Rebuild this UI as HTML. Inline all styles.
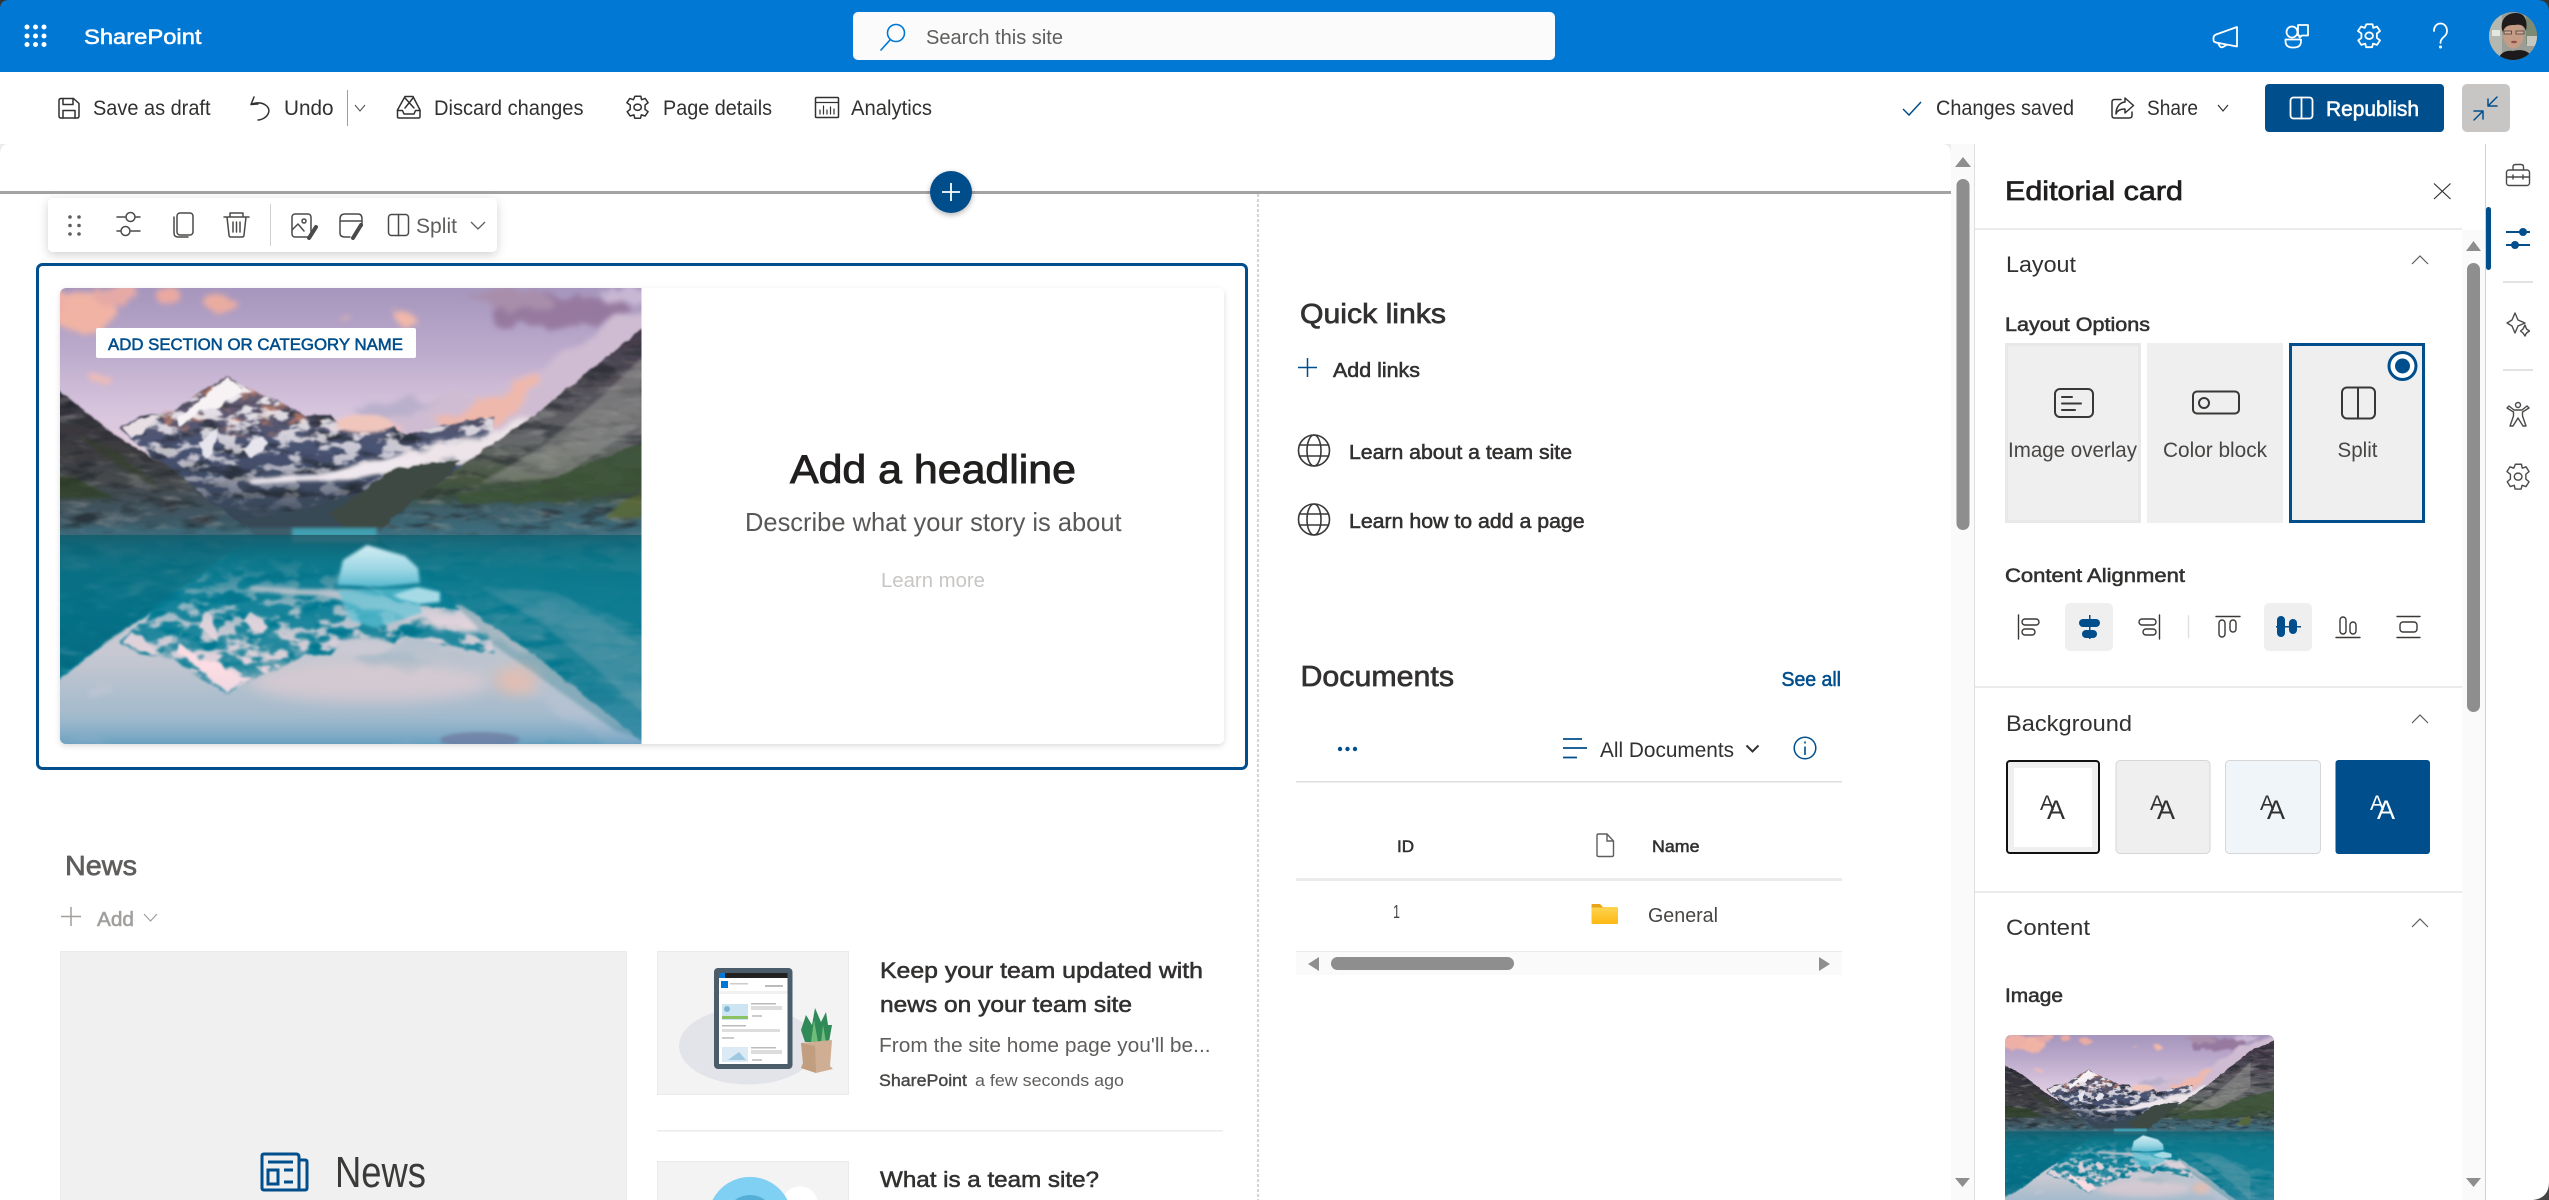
<!DOCTYPE html>
<html lang="en"><head><meta charset="utf-8"><title>SharePoint - Editorial card</title>
<style>
html,body{margin:0;padding:0;background:#fff;width:2549px;height:1200px;overflow:hidden}
svg{display:block}
#thumb{position:absolute;left:2005px;top:1035px;width:269px;height:165px;overflow:hidden;border-radius:6px 6px 0 0}
text{font-family:"Liberation Sans",sans-serif;fill:#323130;font-size:21px;white-space:pre}
.b{stroke:#323130;stroke-width:.55px}
.ic{fill:none;stroke:#323130;stroke-width:1.5;stroke-linejoin:round;stroke-linecap:round}
.w{fill:none;stroke:#fff;stroke-width:1.8;stroke-linejoin:round;stroke-linecap:round}
.bl{fill:none;stroke:#004e8c;stroke-width:1.8;stroke-linejoin:round;stroke-linecap:round}
</style></head><body>
<svg xmlns="http://www.w3.org/2000/svg" width="2549" height="1200" viewBox="0 0 2549 1200">
<defs>
<linearGradient id="sky" x1="0" y1="0" x2="0" y2="1"><stop offset="0" stop-color="#a595bc"/><stop offset=".25" stop-color="#bcaacc"/><stop offset=".5" stop-color="#d9c6de"/><stop offset=".75" stop-color="#eed5de"/><stop offset="1" stop-color="#f2d9dc"/></linearGradient>
<linearGradient id="rockG" gradientUnits="userSpaceOnUse" x1="0" y1="90" x2="0" y2="245"><stop offset="0" stop-color="#6e5f70"/><stop offset=".45" stop-color="#485272"/><stop offset="1" stop-color="#33424f"/></linearGradient>
<linearGradient id="lslope" gradientUnits="userSpaceOnUse" x1="0" y1="100" x2="0" y2="250"><stop offset="0" stop-color="#32303a"/><stop offset=".4" stop-color="#3d3c40"/><stop offset=".62" stop-color="#45494c"/><stop offset=".85" stop-color="#3f5561"/><stop offset="1" stop-color="#3a6675"/></linearGradient>
<linearGradient id="rslope" gradientUnits="userSpaceOnUse" x1="0" y1="40" x2="0" y2="250"><stop offset="0" stop-color="#43384a"/><stop offset=".3" stop-color="#55525a"/><stop offset=".55" stop-color="#66686a"/><stop offset=".72" stop-color="#46563f"/><stop offset=".8" stop-color="#3a4d40"/><stop offset=".86" stop-color="#3f5f6a"/><stop offset="1" stop-color="#3c6f80"/></linearGradient>
<linearGradient id="snA" gradientUnits="userSpaceOnUse" x1="0" y1="95" x2="0" y2="225"><stop offset="0" stop-color="#fff"/><stop offset=".6" stop-color="#fff" stop-opacity=".7"/><stop offset="1" stop-color="#fff" stop-opacity=".05"/></linearGradient>
<linearGradient id="ice" x1="0" y1="0" x2="0" y2="1"><stop offset="0" stop-color="#d3edf3"/><stop offset=".6" stop-color="#9ad6e3"/><stop offset="1" stop-color="#58b9d0"/></linearGradient>
<linearGradient id="wtop" x1="0" y1="0" x2="0" y2="1"><stop offset="0" stop-color="#14505e" stop-opacity=".75"/><stop offset=".12" stop-color="#12707f" stop-opacity=".5"/><stop offset=".4" stop-color="#1590a5" stop-opacity=".05"/><stop offset=".62" stop-color="#b0c0dc" stop-opacity="0"/><stop offset=".83" stop-color="#a4bcd8" stop-opacity=".35"/><stop offset="1" stop-color="#4e94ba" stop-opacity=".85"/></linearGradient>
<linearGradient id="folder" x1="0" y1="0" x2="0" y2="1"><stop offset="0" stop-color="#ffd95c"/><stop offset="1" stop-color="#fdb813"/></linearGradient>
<filter id="b06" x="0" y="0" width="100%" height="100%"><feGaussianBlur stdDeviation=".7"/></filter>
<filter id="b2" x="-20%" y="-20%" width="140%" height="140%"><feGaussianBlur stdDeviation="1.600"/></filter>
<filter id="b5" x="-30%" y="-30%" width="160%" height="160%"><feGaussianBlur stdDeviation="7"/></filter>
<filter id="cl" x="-30%" y="-40%" width="160%" height="180%"><feTurbulence type="fractalNoise" baseFrequency=".035" numOctaves="3" seed="9"/><feDisplacementMap in="SourceGraphic" scale="28" xChannelSelector="R" yChannelSelector="G"/><feGaussianBlur stdDeviation="2.600"/></filter>
<filter id="edge" x="-5%" y="-5%" width="110%" height="110%"><feTurbulence type="fractalNoise" baseFrequency=".09" numOctaves="3" seed="4"/><feDisplacementMap in="SourceGraphic" scale="6" xChannelSelector="R" yChannelSelector="G"/><feGaussianBlur stdDeviation=".6"/></filter>
<filter id="fSnow" x="0" y="0" width="100%" height="100%" color-interpolation-filters="sRGB"><feTurbulence type="fractalNoise" baseFrequency=".05 .09" numOctaves="4" seed="11"/><feColorMatrix type="matrix" values="0 0 0 0 .96 0 0 0 0 .94 0 0 0 0 .96 7 0 0 0 -3.400"/><feComposite in2="SourceAlpha" operator="in"/><feGaussianBlur stdDeviation=".4"/></filter>
<filter id="fRust" x="0" y="0" width="100%" height="100%" color-interpolation-filters="sRGB"><feTurbulence type="fractalNoise" baseFrequency=".05 .08" numOctaves="3" seed="23"/><feColorMatrix type="matrix" values="0 0 0 0 .78 0 0 0 0 .50 0 0 0 0 .40 5 0 0 0 -2.700"/><feComposite in2="SourceAlpha" operator="in"/><feGaussianBlur stdDeviation=".8"/></filter>
<filter id="fGrey" x="0" y="0" width="100%" height="100%" color-interpolation-filters="sRGB"><feTurbulence type="fractalNoise" baseFrequency=".03 .11" numOctaves="4" seed="31"/><feColorMatrix type="matrix" values="0 0 0 0 .58 0 0 0 0 .58 0 0 0 0 .58 3.500 0 0 0 -1.800"/><feComposite in2="SourceAlpha" operator="in"/><feGaussianBlur stdDeviation=".6"/></filter>
<filter id="fDark" x="0" y="0" width="100%" height="100%" color-interpolation-filters="sRGB"><feTurbulence type="fractalNoise" baseFrequency=".025 .09" numOctaves="4" seed="47"/><feColorMatrix type="matrix" values="0 0 0 0 .12 0 0 0 0 .14 0 0 0 0 .16 4 0 0 0 -2"/><feComposite in2="SourceAlpha" operator="in"/><feGaussianBlur stdDeviation=".6"/></filter>
<filter id="refl" x="0" y="0" width="100%" height="100%" color-interpolation-filters="sRGB"><feColorMatrix type="matrix" values=".42 .826 .154 0 -.35  .165 .3245 .0605 0 .34  .135 .2655 .0495 0 .46  0 0 0 1 0"/><feGaussianBlur stdDeviation="1.100"/></filter>
<filter id="sh" x="-10%" y="-30%" width="120%" height="170%"><feDropShadow dx="0" dy="3" stdDeviation="5" flood-color="#000" flood-opacity=".18"/></filter>
<filter id="sh2" x="-5%" y="-5%" width="110%" height="110%"><feDropShadow dx="0" dy="2" stdDeviation="3" flood-color="#000" flood-opacity=".14"/></filter>
<filter id="sh3" x="-30%" y="-30%" width="160%" height="170%"><feDropShadow dx="0" dy="2" stdDeviation="3" flood-color="#000" flood-opacity=".3"/></filter>
<clipPath id="cMain"><path d="M66 288H641.500V744H66a6 6 0 0 1-6-6V294a6 6 0 0 1 6-6z"/></clipPath>
<clipPath id="cAv"><circle cx="2513" cy="36" r="24"/></clipPath>
<clipPath id="cWater"><rect x="-60" y="247" width="710" height="215"/></clipPath>

<symbol id="gear" viewBox="3 1 17.4 20.500" preserveAspectRatio="none" overflow="visible">
<path d="M9.800 1.200h4.400l.6 3.100 2.700-1.100 2.200 3.800-2.300 2.100v3.800l2.300 2.100-2.200 3.800-2.900-1-.6 3h-4.400l-.6-3-2.900 1-2.200-3.800 2.300-2.100V9.100L3.700 7l2.200-3.800 2.700 1.100z" vector-effect="non-scaling-stroke"/><ellipse cx="11.800" cy="11" rx="2.800" ry="2.800" vector-effect="non-scaling-stroke"/>
</symbol>

<g id="top">
<rect x="-60" y="-2" width="710" height="260" fill="url(#sky)"/>
<g filter="url(#cl)">
<ellipse cx="20" cy="22" rx="36" ry="20" fill="#f1b3a4"/><ellipse cx="-30" cy="18" rx="34" ry="20" fill="#eeb0a6"/>
<ellipse cx="55" cy="8" rx="22" ry="10" fill="#e6aaa6"/><ellipse cx="108" cy="8" rx="12" ry="10" fill="#eaa9a0"/>
<ellipse cx="158" cy="16" rx="18" ry="9" fill="#ebaca0"/><ellipse cx="345" cy="32" rx="11" ry="6" fill="#f2b8a8"/><ellipse cx="285" cy="32" rx="9" ry="3" fill="#e6b4ae"/>
<ellipse cx="40" cy="90" rx="14" ry="6" fill="#f0bcb2"/>
<ellipse cx="500" cy="22" rx="70" ry="18" fill="#97799f"/><ellipse cx="450" cy="12" rx="40" ry="9" fill="#a88eaa"/><ellipse cx="570" cy="5" rx="30" ry="6" fill="#c9b8d4"/>
<ellipse cx="-50" cy="95" rx="20" ry="8" fill="#e6b8b0"/>
</g>
<g filter="url(#cl)">
<path d="M295 120L370 112 430 105 480 85 520 55 560 30 650 0V70L560 90 500 130 440 165 400 165 330 150z" fill="#cfbcd2"/>
<path d="M375 135L420 112 478 88 482 100 440 135 400 148z" fill="#eeb8ac"/>
<path d="M295 118L340 112 380 118 345 130 310 128z" fill="#b9b0cc"/>
<path d="M285 132L320 126 345 142 300 148z" fill="#ecc4be"/>
</g>
<!-- main massif -->
<g filter="url(#edge)"><path d="M59 140L80 128 111 125 140 105 167 88 189 102 219 113 245 128 271 127 282 140 334 140 345 147 371 140 434 128 430 170 360 205 300 235 240 250H180L140 210 100 175z" fill="url(#rockG)"/></g>
<path d="M59 140L80 128 111 125 140 105 167 88 189 102 219 113 245 128 271 127 282 140 334 140 345 147 371 140 434 128 430 170 360 205 300 235 240 250H180L140 210 100 175z" fill="#fff" filter="url(#fDark)" opacity=".7"/>
<path d="M100 125L167 90 200 105 250 128 285 142 200 150 110 145z" fill="#fff" filter="url(#fRust)" opacity=".75"/>
<path d="M59 140L80 128 111 125 140 105 167 88 189 102 219 113 245 128 271 127 282 140 334 140 345 147 371 140 434 128 430 170 360 205 300 235 200 230 140 210 100 175z" fill="url(#snA)" filter="url(#fSnow)"/>
<g filter="url(#edge)">
<path d="M118 130L145 108 167 89 186 103 168 112 160 120 140 122 118 140z" fill="#f7f3f5"/>
<path d="M62 140L80 130 96 130 82 146 72 150z" fill="#e8dfe4"/>
<path d="M140 155L158 138 153 165 145 172zM180 162L202 148 208 155 192 170z" fill="#e6e4ec"/>
</g>
<ellipse cx="304" cy="136" rx="28" ry="9" fill="#f0c6bc" filter="url(#b2)"/>
<g filter="url(#cl)"><path d="M285 180L350 165 420 150 470 125 480 135 430 170 365 178 310 188z" fill="#ece4e8"/></g>
<path d="M188 192L225 188 265 186 300 176 350 168 368 170 335 182 290 192 240 193 192 196z" fill="#efe8ee" filter="url(#b2)"/>
<path d="M180 232L240 222 300 205 345 195 370 250H190z" fill="#394a56"/>
<path d="M270 225L300 205 335 180 400 172 370 205 320 240 290 248z" fill="#3e4a42" filter="url(#edge)"/>
<!-- slopes -->
<g filter="url(#edge)"><path d="M650 12L582 40 520 90 475 127 408 173 353 213 315 247 250 250H650z" fill="url(#rslope)"/></g>
<path d="M650 12L582 40 520 90 475 127 408 173 353 213 315 247 650 247z" fill="#fff" filter="url(#fGrey)" opacity=".55"/>
<path d="M650 12L582 40 520 90 475 127 408 173 353 213 315 247 650 247z" fill="#fff" filter="url(#fDark)" opacity=".6"/>
<path d="M582 70L540 110 480 160 420 195 500 190 582 135z" fill="#9a9a96" opacity=".5" filter="url(#b2)"/>
<path d="M395 205L470 200 530 175 582 155 650 140V190L500 214 400 215z" fill="#3d5238" opacity=".85" filter="url(#edge)"/>
<path d="M560 215L582 205 582 230 545 230z" fill="#5d6a30" opacity=".8" filter="url(#b2)"/>
<g filter="url(#edge)"><path d="M-70 65L0 103 59 150 111 180 156 217 195 246 195 258H-70z" fill="url(#lslope)"/></g>
<path d="M-70 65L0 103 59 150 111 180 156 217 195 246 -70 246z" fill="#fff" filter="url(#fGrey)" opacity=".5"/>
<path d="M-70 65L0 103 59 150 111 180 156 217 195 246 -70 246z" fill="#fff" filter="url(#fDark)" opacity=".65"/>
<path d="M-70 180L15 190 55 210 -70 212z" fill="#2f3f28" opacity=".8" filter="url(#b2)"/>
<path d="M15 145L60 165 100 200 60 180z" fill="#34402c" opacity=".6" filter="url(#b2)"/>
<rect x="-60" y="240" width="710" height="8" fill="#3f7080" opacity=".55" filter="url(#b2)"/>
<rect x="232" y="240" width="85" height="10" fill="#3f9fb0" filter="url(#b2)"/>
</g>

<g id="mtn">
<g filter="url(#b06)"><use href="#top"/></g>
<g clip-path="url(#cWater)">
<g filter="url(#refl)"><use href="#top" transform="translate(0,494) scale(1,-1)"/></g>
<rect x="-60" y="247" width="710" height="215" fill="url(#wtop)"/>
<path d="M-60 247H193L60 345 0 385-60 420z" fill="#0f5f70" opacity=".32" filter="url(#b2)"/>
<path d="M315 247H650V470L556 443 434 357 380 300z" fill="#0f7284" opacity=".28" filter="url(#b2)"/>
<ellipse cx="310" cy="395" rx="120" ry="20" fill="#f0d0d4" opacity=".5" filter="url(#b5)"/>
<ellipse cx="456" cy="393" rx="22" ry="14" fill="#f0bca8" opacity=".7" filter="url(#b5)"/>
<path d="M278 302L357 300 362 325 315 340 290 332z" fill="#5ec3d6" opacity=".7" filter="url(#b2)"/>
<path d="M277 297L283 272 307 257 345 268 358 280 360 295 320 299z" fill="url(#ice)" filter="url(#b2)"/>
<path d="M333 307L358 299 380 304 380 314 360 316 340 311z" fill="#a6dbe6" filter="url(#b2)"/>
<ellipse cx="420" cy="452" rx="40" ry="8" fill="#6c6f98" opacity=".6" filter="url(#b2)"/>
</g>
</g>
</defs>

<!-- base -->
<rect width="2549" height="1200" fill="#fff"/>
<!-- suite bar -->
<rect width="2549" height="72" fill="#0078d4"/>
<path d="M0 0H9Q0 0 0 9zM2549 0H2537Q2549 0 2549 12z" fill="#333"/>
<g fill="#fff"><circle cx="27" cy="27" r="2.500"/><circle cx="35.500" cy="27" r="2.500"/><circle cx="44" cy="27" r="2.500"/><circle cx="27" cy="36" r="2.500"/><circle cx="35.500" cy="36" r="2.500"/><circle cx="44" cy="36" r="2.500"/><circle cx="27" cy="44.500" r="2.500"/><circle cx="35.500" cy="44.500" r="2.500"/><circle cx="44" cy="44.500" r="2.500"/></g>
<text x="84" y="44" class="b" style="fill:#fff;stroke:#fff;font-size:21px" textLength="117.500" lengthAdjust="spacingAndGlyphs">SharePoint</text>
<rect x="853" y="12" width="702" height="48" rx="5" fill="#fbfbfb"/>
<g fill="none" stroke="#0078d4" stroke-width="1.600"><circle cx="896" cy="33" r="8.500"/><path d="M890 40L881 50" stroke-linecap="round"/></g>
<text x="926" y="44" style="fill:#5f5e5c;font-size:20.500px" textLength="137" lengthAdjust="spacingAndGlyphs">Search this site</text>

<g class="w">
<path d="M2237 27L2216 34.500Q2213.500 35.500 2213.500 38V40Q2213.500 42 2216 42.500L2237 46.500Z"/><path d="M2218 43L2220 46.500Q2221 47.800 2223 47L2226.500 45"/>
<circle cx="2292" cy="32" r="5.500"/><path d="M2285.500 39.500H2301V41Q2301 47.500 2294 47.500H2292.500Q2285.500 47.500 2285.500 41z"/><path d="M2298 25H2308V35.500H2302L2299.500 37.500V35.500H2298z"/>
<use href="#gear" x="2357" y="24" width="24" height="24"/>
<path d="M2434 31C2434 21 2447 21 2447 31C2447 37 2440.500 37 2440.500 43"/><circle cx="2440.500" cy="47" r=".6"/>
</g>
<g clip-path="url(#cAv)">
<rect x="2489" y="12" width="48" height="48" fill="#9b9e96"/>
<rect x="2489" y="12" width="13" height="48" fill="#b4b8b0"/><rect x="2492" y="30" width="8" height="6" fill="#e4e6e0"/><rect x="2526" y="14" width="11" height="30" fill="#7d8a72"/><rect x="2527" y="36" width="10" height="10" fill="#c6c8c0"/>
<path d="M2498 60C2500 52 2507 50 2513 51C2521 49 2530 50 2533 60z" fill="#1d1a1c"/>
<ellipse cx="2513.500" cy="34" rx="10.500" ry="14.500" fill="#c59c86"/>
<path d="M2502 30C2500 18 2508 13 2516 13C2525 13 2528 21 2526 31C2524 25 2520 24 2515 25C2510 25 2505 25 2503 32z" fill="#1f1a1b"/>
<path d="M2504 31H2511.500V34H2504zM2516 31H2524V34H2516z" stroke="#4a3c38" stroke-width=".8" fill="#d0aa96"/>
<ellipse cx="2514" cy="42" rx="3" ry="1.200" fill="#904e48"/>
</g>

<!-- command bar -->
<g class="ic">
<path d="M59 100.500Q59 98.500 61 98.500H73.500L79 103.500V116Q79 118 77 118H61Q59 118 59 116Z"/><path d="M63 98.500V104.500H73V98.500M63 118V110.500H75V118"/>
<path d="M254 97L251 104.500L258 104M252 104C262 100 272 107 268 114C266 118 261 120 258 120"/>
<path d="M397.500 110V116.500Q397.500 118 399 118H418.500Q420 118 420 116.500V110L413 96.500H405Z"/><path d="M397.500 110.500H402.500L404 114H414L415.500 110.500H420M405 98L414 108M413 98L405 108"/>
<use href="#gear" x="626" y="96" width="23" height="23"/>
<rect x="815.500" y="97.500" width="23" height="20" rx="1"/><path d="M815.500 102.500H838.500M820 114V110M823.500 114V106M827 114V110M830.500 114V107M834 114V109" stroke-width="1.200"/>
</g>
<path d="M347.500 90V126" stroke="#a19f9d" stroke-width="1"/>
<path d="M355 105L360 111L365 105" fill="none" stroke="#605e5c" stroke-width="1.200"/>
<text x="93" y="115" textLength="117.500" lengthAdjust="spacingAndGlyphs">Save as draft</text>
<text x="284" y="115" textLength="49.500" lengthAdjust="spacingAndGlyphs">Undo</text>
<text x="434" y="115" textLength="149.500" lengthAdjust="spacingAndGlyphs">Discard changes</text>
<text x="663" y="115" textLength="109" lengthAdjust="spacingAndGlyphs">Page details</text>
<text x="851" y="115" textLength="81" lengthAdjust="spacingAndGlyphs">Analytics</text>

<path d="M1903 109L1909 115L1921 102" fill="none" stroke="#004e8c" stroke-width="1.500"/>
<text x="1936" y="115" textLength="138" lengthAdjust="spacingAndGlyphs">Changes saved</text>
<g class="ic"><path d="M2121 99.500H2114.500Q2112 99.500 2112 102V115.500Q2112 118 2114.500 118H2129Q2132 118 2132 115.500V112"/><path d="M2125 98L2133.500 105.500L2125 113V109C2120 109 2117 111 2116 114C2116 108 2119 102.500 2125 102Z"/></g>
<text x="2147" y="115" textLength="51" lengthAdjust="spacingAndGlyphs">Share</text>
<path d="M2218 105L2223 111L2228 105" fill="none" stroke="#323130" stroke-width="1.200"/>
<rect x="2265" y="84" width="179" height="48" rx="4" fill="#004e8c"/>
<rect x="2290.500" y="97.500" width="22" height="21" rx="3" class="w"/><path d="M2301.500 97.500V118.500" class="w"/>
<text x="2326" y="116" class="b" style="fill:#fff;stroke:#fff" textLength="93" lengthAdjust="spacingAndGlyphs">Republish</text>
<rect x="2462" y="84" width="48" height="48" rx="5" fill="#c8c6c4"/>
<path d="M2497 97L2488 106M2488 99V106H2497M2474 120L2483 111M2474 111H2483V119" class="bl" style="stroke-width:1.500"/>

<!-- canvas corners -->
<path d="M0 144H9Q0 144 0 155zM1951 144H1942Q1951 144 1951 155z" fill="#ececec"/>

<!-- section line and plus -->
<rect x="0" y="191" width="1951" height="3" fill="#a3a3a3"/>
<path d="M1258 194V1200" stroke="#a8a8a8" stroke-width="1" stroke-dasharray="3 2"/>
<circle cx="951" cy="192" r="21" fill="#004e8c" filter="url(#sh3)"/>
<path d="M951 183V201M942 192H960" stroke="#fff" stroke-width="1.800"/>

<!-- selected webpart -->
<rect x="37.500" y="264.500" width="1209" height="504" rx="5" fill="#fff" stroke="#004e8c" stroke-width="3"/>
<rect x="60" y="288" width="1164" height="456" rx="6" fill="#fff" filter="url(#sh2)"/>
<g clip-path="url(#cMain)"><use href="#mtn" transform="translate(60,288)"/></g>
<rect x="96" y="328" width="320" height="30" rx="2" fill="#fff"/>
<text x="108" y="350" class="b" style="fill:#004e8c;stroke:#004e8c;font-size:17px" textLength="295" lengthAdjust="spacingAndGlyphs">ADD SECTION OR CATEGORY NAME</text>
<text x="790" y="483" class="b" style="font-size:40px;fill:#201f1e;stroke:#201f1e;stroke-width:.9px" textLength="286" lengthAdjust="spacingAndGlyphs">Add a headline</text>
<text x="745" y="531" style="font-size:26px;fill:#5a5856" textLength="376.600" lengthAdjust="spacingAndGlyphs">Describe what your story is about</text>
<text x="881" y="587" style="font-size:20.500px;fill:#c8c6c4" textLength="104" lengthAdjust="spacingAndGlyphs">Learn more</text>

<!-- floating toolbar -->
<rect x="48" y="198" width="449" height="54" rx="5" fill="#fff" filter="url(#sh)"/>
<g fill="#605e5c"><circle cx="70" cy="217" r="1.800"/><circle cx="79" cy="217" r="1.800"/><circle cx="70" cy="225.500" r="1.800"/><circle cx="79" cy="225.500" r="1.800"/><circle cx="70" cy="234" r="1.800"/><circle cx="79" cy="234" r="1.800"/></g>
<g class="ic" style="stroke:#4a4a48">
<path d="M117 217H125M136 217H140M117 231H120M131 231H140"/><circle cx="130.500" cy="217" r="4.500"/><circle cx="125.500" cy="231" r="4.500"/>
<rect x="177" y="213" width="16" height="22" rx="3"/><path d="M174 217V233Q174 237 178 237H188"/>
<path d="M224 217H249M230 217V213H243V217M227 217L229 235Q229 237 231 237H242Q244 237 244 235L246 217M233 222V232M240 222V232M236.500 222V232"/>
<rect x="292" y="214" width="19" height="23" rx="3"/><circle cx="304" cy="221" r="2"/><path d="M292 230L298 224L304 231"/>
<path d="M340 219Q340 214 345 214H358Q362 214 362 219V226M340 221H362M340 219V233Q340 237 345 237H350"/>
<rect x="388.500" y="214.500" width="20" height="21" rx="3"/><path d="M398.500 214.500V235.500"/>
</g>
<path d="M309 238L316 227M361 225L353 238" stroke="#4a4a48" stroke-width="4" stroke-linecap="round"/>
<path d="M270.500 204V246" stroke="#d2d0ce"/>
<text x="416" y="233" style="fill:#605e5c" textLength="41" lengthAdjust="spacingAndGlyphs">Split</text>
<path d="M471 222L478 229L485 222" fill="none" stroke="#605e5c" stroke-width="1.300"/>

<!-- quick links -->
<text x="1300" y="323" class="b" style="font-size:28px;stroke-width:.7px" textLength="146" lengthAdjust="spacingAndGlyphs">Quick links</text>
<path d="M1298 367.500H1317M1307.500 358V377" stroke="#004e8c" stroke-width="1.500"/>
<text x="1333" y="377" class="b" style="font-size:20px" textLength="87" lengthAdjust="spacingAndGlyphs">Add links</text>
<g class="ic" style="stroke:#3a3836;stroke-width:1.600">
<circle cx="1314" cy="450.500" r="15.500"/><ellipse cx="1314" cy="450.500" rx="7" ry="15.500"/><path d="M1299.500 445H1328.500M1299.500 456H1328.500"/>
<circle cx="1314" cy="519.500" r="15.500"/><ellipse cx="1314" cy="519.500" rx="7" ry="15.500"/><path d="M1299.500 514H1328.500M1299.500 525H1328.500"/>
</g>
<text x="1349" y="459" class="b" style="font-size:20px" textLength="223" lengthAdjust="spacingAndGlyphs">Learn about a team site</text>
<text x="1349" y="528" class="b" style="font-size:20px" textLength="235.600" lengthAdjust="spacingAndGlyphs">Learn how to add a page</text>

<!-- documents -->
<text x="1300.500" y="686" class="b" style="font-size:29px;stroke-width:.7px" textLength="153.500" lengthAdjust="spacingAndGlyphs">Documents</text>
<text x="1781.500" y="686" class="b" style="fill:#004e8c;stroke:#004e8c;font-size:20px" textLength="59.500" lengthAdjust="spacingAndGlyphs">See all</text>
<g fill="#004e8c"><circle cx="1340" cy="749" r="2.200"/><circle cx="1347.500" cy="749" r="2.200"/><circle cx="1355" cy="749" r="2.200"/></g>
<path d="M1563 739H1582M1563 748H1587M1563 757.500H1577" stroke="#004e8c" stroke-width="1.800"/>
<text x="1600" y="757" textLength="134" lengthAdjust="spacingAndGlyphs">All Documents</text>
<path d="M1746.500 745.500L1752.500 751.500L1758.500 745.500" fill="none" stroke="#323130" stroke-width="2"/>
<circle cx="1805" cy="748" r="10.800" fill="none" stroke="#004e8c" stroke-width="1.500"/><path d="M1805 746.500V755M1805 741.500V743.500" stroke="#004e8c" stroke-width="1.600"/>
<rect x="1296" y="781" width="546" height="1.500" fill="#e1dfdd"/>
<text x="1397" y="852" class="b" style="font-size:17px" textLength="17" lengthAdjust="spacingAndGlyphs">ID</text>
<path d="M1597 835.500Q1597 834 1598.500 834H1607L1613.500 841V855Q1613.500 856.500 1612 856.500H1598.500Q1597 856.500 1597 855ZM1607 834V841H1613.500" fill="#fff" stroke="#605e5c" stroke-width="1.400"/>
<text x="1652" y="852" class="b" style="font-size:17px" textLength="47.500" lengthAdjust="spacingAndGlyphs">Name</text>
<rect x="1296" y="878" width="546" height="3" fill="#edebe9"/>
<text x="1393" y="918" style="font-size:18px;fill:#484644" textLength="7" lengthAdjust="spacingAndGlyphs">1</text>
<path d="M1591.500 905Q1591.500 904 1593 904H1600L1603 907H1616.500Q1618 907 1618 908.500V923Q1618 924 1616.500 924H1593Q1591.500 924 1591.500 923Z" fill="url(#folder)"/>
<path d="M1591.500 905Q1591.500 904 1593 904H1600L1603 907.500H1591.500Z" fill="#e8a318"/>
<text x="1648" y="922" style="font-size:20px;fill:#484644" textLength="70" lengthAdjust="spacingAndGlyphs">General</text>
<rect x="1296" y="952" width="546" height="23" fill="#fafafa"/><rect x="1296" y="951" width="546" height="1" fill="#edebe9"/>
<rect x="1331" y="957" width="183" height="13" rx="6.500" fill="#8e8e8e"/>
<path d="M1319 957V971L1308 964zM1819 957V971L1830 964z" fill="#8e8e8e"/>

<!-- news -->
<text x="65" y="875" class="b" style="font-size:28px;fill:#605e5c;stroke:#605e5c;stroke-width:.7px" textLength="72" lengthAdjust="spacingAndGlyphs">News</text>
<path d="M61 916.500H81M71 907V926" stroke="#a19f9d" stroke-width="1.500"/>
<text x="97" y="926" class="b" style="fill:#a19f9d;stroke:#a19f9d;font-size:20px" textLength="37" lengthAdjust="spacingAndGlyphs">Add</text>
<path d="M144 914L150.500 921L157 914" fill="none" stroke="#a19f9d" stroke-width="1.200"/>
<rect x="60" y="951" width="567" height="249" fill="#ebebeb"/><rect x="61" y="952" width="565" height="248" fill="#f0f0f0"/>
<g fill="none" stroke="#004e8c" stroke-width="3"><path d="M262 1156Q262 1154 264 1154H296Q299 1154 299 1157V1190H264Q262 1190 262 1188Z"/><path d="M299 1160H305Q307 1160 307 1162V1188Q307 1190 305 1190H296"/></g>
<path d="M268 1162H293M268 1170H278V1184H268ZM284 1170H293M284 1182H293" fill="none" stroke="#004e8c" stroke-width="3"/>
<text x="335" y="1187" style="font-size:44px;fill:#3b3a39" textLength="91" lengthAdjust="spacingAndGlyphs">News</text>

<rect x="657.500" y="951.500" width="191" height="143" fill="#f3f3f3" stroke="#ebebeb"/>
<ellipse cx="748" cy="1046" rx="69" ry="38.500" fill="#e2e4e9"/>
<rect x="714" y="968" width="78.500" height="101" rx="4" fill="#4b5d6b"/>
<rect x="719" y="973" width="68.500" height="91" fill="#fff"/>
<rect x="719" y="973" width="68.500" height="5" fill="#222"/><rect x="719" y="973" width="6" height="5" fill="#0078d4"/>
<rect x="721" y="981" width="7" height="7" fill="#0078d4"/><rect x="730" y="983" width="18" height="1.500" fill="#ccc"/><rect x="765" y="985" width="18" height="2" fill="#bbb"/>
<rect x="719" y="991" width="68.500" height="3" fill="#f1f1f1"/>
<rect x="722" y="1004" width="26" height="16" fill="#cde4f2"/><rect x="722" y="1016" width="26" height="3" fill="#8cc264"/><circle cx="727" cy="1009" r="3" fill="#7cb6d2"/>
<rect x="751" y="1003" width="25" height="1.500" fill="#bbb"/><rect x="751" y="1006" width="31" height="4" fill="#ddd"/><rect x="752" y="1015" width="10" height="2" fill="#ccc"/>
<rect x="722" y="1025" width="24" height="1.500" fill="#bbb"/><rect x="722" y="1029" width="58" height="3" fill="#ddd"/><rect x="722" y="1037" width="12" height="2" fill="#ccc"/>
<rect x="722" y="1047" width="26" height="15" fill="#dbeaf4"/><path d="M728 1060L739 1052L746 1060z" fill="#9ec9e0"/>
<rect x="751" y="1047" width="25" height="1.500" fill="#bbb"/><rect x="751" y="1050" width="31" height="4" fill="#ddd"/><rect x="752" y="1059" width="10" height="2" fill="#ccc"/>
<path d="M801 1030L806 1015 812 1025 815 1008 821 1022 826 1012 828 1025 832 1025 829 1042H805z" fill="#2f8a58"/>
<path d="M811 1042L814 1020 818 1042zM821 1042L823 1025 826 1042z" fill="#6fbb7a"/>
<path d="M801 1043L832 1040 830 1066 833 1069 816 1073 801 1068 803 1063z" fill="#cfae94"/><path d="M815 1046L816 1073 801 1068 803 1063 801 1043z" fill="#c19e80"/>
<rect x="657" y="1130" width="566" height="1.500" fill="#edebe9"/>
<rect x="657" y="1161" width="192" height="39" fill="#ebebeb"/><rect x="658" y="1162" width="190" height="38" fill="#f3f3f3"/>
<path d="M782.500 1200A18 18 0 0 1 817.500 1200Z" fill="#fff"/><path d="M712.500 1200A42 42 0 0 1 787.500 1200Z" fill="#7fd0f2"/><path d="M735 1200A25 25 0 0 1 765 1200Z" fill="#55aed6"/>

<text x="880" y="978" class="b" style="font-size:22px" textLength="323" lengthAdjust="spacingAndGlyphs">Keep your team updated with</text>
<text x="880" y="1012" class="b" style="font-size:22px" textLength="252" lengthAdjust="spacingAndGlyphs">news on your team site</text>
<text x="879" y="1052" style="fill:#605e5c;font-size:20px" textLength="331.600" lengthAdjust="spacingAndGlyphs">From the site home page you'll be...</text>
<text x="879" y="1086" class="b" style="font-size:17px;fill:#484644;stroke:#484644;stroke-width:.4px" textLength="88" lengthAdjust="spacingAndGlyphs">SharePoint</text>
<text x="975" y="1086" style="font-size:17px;fill:#605e5c" textLength="149" lengthAdjust="spacingAndGlyphs">a few seconds ago</text>
<text x="880" y="1187" class="b" style="font-size:22px" textLength="219" lengthAdjust="spacingAndGlyphs">What is a team site?</text>

<!-- main scrollbar -->
<rect x="1951" y="144" width="24" height="1056" fill="#fafafa"/>
<rect x="1956.500" y="179" width="13" height="351" rx="6.500" fill="#8e8e8e"/>
<path d="M1963 157L1971 167H1955zM1955 1178H1970L1962.500 1187z" fill="#8e8e8e"/>

<!-- property pane -->
<rect x="1975" y="144" width="510" height="1056" fill="#fff"/>
<rect x="1974" y="144" width="1" height="1056" fill="#e1dfdd"/>
<text x="2005" y="200" class="b" style="font-size:27px;fill:#201f1e;stroke:#201f1e;stroke-width:.7px" textLength="178" lengthAdjust="spacingAndGlyphs">Editorial card</text>
<path d="M2434 183.500L2450.500 199M2450.500 183.500L2434 199" stroke="#323130" stroke-width="1.200"/>
<rect x="1975" y="228" width="487" height="2" fill="#edebe9"/>
<text x="2006" y="272" style="font-size:22px" textLength="70" lengthAdjust="spacingAndGlyphs">Layout</text>
<path d="M2412 264L2420 256L2428 264" fill="none" stroke="#605e5c" stroke-width="1.200"/>
<text x="2005" y="331" class="b" style="font-size:19px" textLength="145" lengthAdjust="spacingAndGlyphs">Layout Options</text>

<rect x="2006.500" y="344.500" width="133" height="177" fill="#efefef" stroke="#e8e8e8" stroke-width="3"/>
<rect x="2147" y="343" width="136" height="180" fill="#efefef"/>
<rect x="2290.500" y="344.500" width="133" height="177" fill="#efefef" stroke="#004e8c" stroke-width="3"/>
<g class="ic" style="stroke-width:2;stroke:#3a3836">
<rect x="2055" y="389" width="38" height="28" rx="5"/><path d="M2062 397H2072M2062 403.500H2081M2062 410H2075"/>
<rect x="2193" y="391.500" width="46" height="22" rx="4"/><circle cx="2204" cy="403" r="5"/>
<rect x="2342" y="387.500" width="33" height="31" rx="5"/><path d="M2358 387.500V418.500"/>
</g>
<text x="2008" y="457" style="fill:#484644" textLength="129" lengthAdjust="spacingAndGlyphs">Image overlay</text>
<text x="2163" y="457" style="fill:#484644" textLength="104" lengthAdjust="spacingAndGlyphs">Color block</text>
<text x="2337.500" y="457" style="fill:#484644" textLength="40" lengthAdjust="spacingAndGlyphs">Split</text>
<circle cx="2402.500" cy="366" r="13.500" fill="#fff" stroke="#004e8c" stroke-width="3"/><circle cx="2402.500" cy="366" r="7.500" fill="#004e8c"/>

<text x="2005" y="582" class="b" style="font-size:19px" textLength="180" lengthAdjust="spacingAndGlyphs">Content Alignment</text>
<rect x="2065" y="603" width="48" height="48" rx="5" fill="#efefef"/><rect x="2264" y="603" width="48" height="48" rx="5" fill="#efefef"/>
<g class="ic" style="stroke-width:1.400;stroke:#3a3836">
<path d="M2018.500 615V639"/><rect x="2022" y="619" width="17" height="6" rx="3"/><rect x="2022" y="629" width="13" height="6" rx="3"/>
<path d="M2159.500 615V639"/><rect x="2139" y="619" width="17" height="6" rx="3"/><rect x="2143" y="629" width="13" height="6" rx="3"/>
<path d="M2216 616.500H2240"/><rect x="2219" y="620" width="6" height="17" rx="3"/><rect x="2230" y="620" width="6" height="12" rx="3"/>
<path d="M2336 637.500H2360"/><rect x="2340" y="617" width="6" height="17" rx="3"/><rect x="2350" y="622" width="6" height="12" rx="3"/>
<path d="M2397 616.500H2420M2397 637.500H2420"/><rect x="2400" y="622" width="17" height="10" rx="3"/>
</g>
<path d="M2188.500 615V638" stroke="#e1dfdd" stroke-width="1.300"/>
<g fill="#004e8c">
<rect x="2079" y="619" width="21" height="8" rx="4"/><rect x="2082" y="630" width="15" height="8" rx="4"/><rect x="2089" y="615" width="1.500" height="24"/>
<rect x="2277" y="616" width="8" height="21" rx="4"/><rect x="2289" y="619" width="8" height="15" rx="4"/><rect x="2276" y="626" width="25" height="1.500"/>
</g>
<rect x="1975" y="686" width="487" height="2" fill="#edebe9"/>

<text x="2006" y="731" style="font-size:22px" textLength="126" lengthAdjust="spacingAndGlyphs">Background</text>
<path d="M2412 723L2420 715L2428 723" fill="none" stroke="#605e5c" stroke-width="1.200"/>
<rect x="2007" y="761" width="92" height="92" rx="3" fill="#efefef" stroke="#111" stroke-width="2"/><rect x="2014" y="768" width="78" height="79" fill="#fff"/>
<rect x="2116" y="760.500" width="94" height="93" rx="4" fill="#efefef" stroke="#d6d6d6"/>
<rect x="2225.500" y="760.500" width="95" height="93" rx="4" fill="#f0f5fa" stroke="#d6d6d6"/>
<rect x="2335.500" y="760" width="94.500" height="94" rx="3" fill="#004e8c"/>
<text x="2040" y="810" style="font-size:21px">A</text><text x="2047" y="819" style="font-size:27px">A</text>
<text x="2150" y="810" style="font-size:21px">A</text><text x="2157" y="819" style="font-size:27px">A</text>
<text x="2260" y="810" style="font-size:21px">A</text><text x="2267" y="819" style="font-size:27px">A</text>
<text x="2370" y="810" style="font-size:21px;fill:#fff">A</text><text x="2377" y="819" style="font-size:27px;fill:#fff">A</text>
<rect x="1975" y="891" width="487" height="2" fill="#edebe9"/>
<text x="2006" y="935" style="font-size:22px" textLength="84" lengthAdjust="spacingAndGlyphs">Content</text>
<path d="M2412 927L2420 919L2428 927" fill="none" stroke="#605e5c" stroke-width="1.200"/>
<text x="2005" y="1002" class="b" style="font-size:19px" textLength="58" lengthAdjust="spacingAndGlyphs">Image</text>

<!-- pane scrollbar -->
<rect x="2462" y="230" width="24" height="970" fill="#fafafa"/>
<rect x="2467" y="263" width="13" height="449" rx="6.500" fill="#8e8e8e"/>
<path d="M2473.500 241L2481 251H2466zM2466 1178H2481L2473.500 1187z" fill="#8e8e8e"/>

<!-- rail -->
<rect x="2485" y="144" width="1" height="1056" fill="#d2d0ce"/>
<g class="ic" style="stroke:#4a4a48;stroke-width:1.400">
<rect x="2506.500" y="170" width="23" height="15.500" rx="2.500"/><path d="M2513 170V167Q2513 164.500 2515.500 164.500H2521Q2523.500 164.500 2523.500 167V170M2506.500 177H2529.500M2513 175V179M2523 175V179"/>
<path d="M2515 313L2518 320L2525 323L2518 326L2515 333L2512 326L2507 323L2512 320Z"/><path d="M2525 325L2526.500 329L2529.500 331L2526.500 333L2525 336L2523 333L2520.500 331L2523 329Z"/>
<circle cx="2518" cy="405" r="2.500"/><path d="M2507 408L2513.500 412V416L2510 426H2513L2518 418L2523 426H2526L2522.500 416V412L2529 408L2527 406L2522 410H2514L2509 406Z"/>
<use href="#gear" x="2506" y="464" width="24" height="26"/>
</g>
<rect x="2486" y="207" width="5" height="63" rx="2.500" fill="#004e8c"/>
<path d="M2506 232H2530M2506 245H2530" stroke="#004e8c" stroke-width="2"/><circle cx="2523" cy="232" r="4" fill="#004e8c"/><circle cx="2515" cy="245" r="4" fill="#004e8c"/>
<path d="M2503 282H2533M2503 370H2533" stroke="#d2d0ce" stroke-width="1.200"/>

<path d="M2549 1200H2533Q2549 1198 2549 1182z" fill="#444"/>
</svg>
<div id="thumb"><svg xmlns="http://www.w3.org/2000/svg" width="269" height="165" viewBox="-47 0 689.700 423"><use href="#mtn"/></svg></div>
</body></html>
